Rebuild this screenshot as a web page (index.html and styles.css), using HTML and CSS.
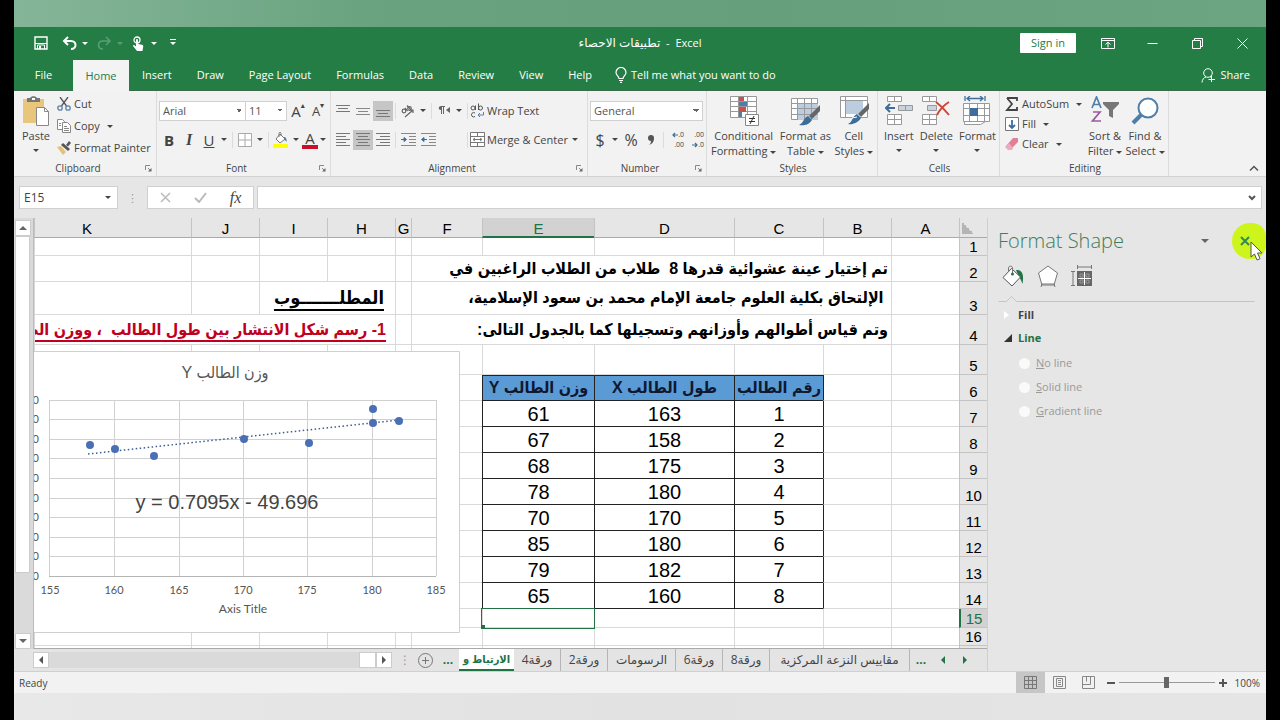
FILE: index.html
```html
<!DOCTYPE html>
<html lang="en">
<head>
    <meta charset="UTF-8">
    <meta name="viewport" content="width=device-width, initial-scale=1.0">
    <title>تطبيقات الاحصاء - Excel</title>
    <link rel="stylesheet" href="styles.css">
</head>
<body>
<div class="desktop">
    <div class="wallpaper"></div>

    <header class="titlebar">
        <div class="quick-access">
            <button class="save" aria-label="Save"><svg width="14" height="14" viewBox="0 0 14 14" fill="none" stroke="#fff"><path d="M1 1h12v12H1z" stroke-width="1.4"/><path d="M3.500 13V9h7v4M1 7.500h12"/><path d="M5 10h2v3H5z" fill="#fff" stroke="none"/></svg></button>
            <button aria-label="Undo"><svg width="15" height="14" viewBox="0 0 15 14" fill="none" stroke="#fff" stroke-width="2"><path d="M6 1L2 5l4 4M2 5h7c6 0 6 8 0 8"/></svg><i class="caret"></i></button>
            <button class="dim" aria-label="Redo"><svg width="15" height="14" viewBox="0 0 15 14" fill="none" stroke="#fff" stroke-width="1.5"><path d="M9 1l4 4-4 4M13 5H6c-6 0-6 8 0 8"/></svg><i class="caret"></i></button>
            <button aria-label="Touch mode"><svg width="14" height="15" viewBox="0 0 14 15"><circle cx="5" cy="4" r="3" fill="none" stroke="#fff" stroke-width="1.3"/><path d="M4 4c0-1.500 2-1.500 2 0v4l4 .7c1 .3 1.400 1 1.200 2L10.500 15H5L1 10c0-1 1-1.300 1.700-.6L4 10.500z" fill="#fff"/></svg><i class="caret"></i></button>
            <button aria-label="Customize"><i class="caret lined"></i></button>
        </div>
        <div class="doc-name"><span lang="ar">تطبيقات الاحصاء</span>&nbsp; - &nbsp;Excel</div>
        <div class="window-controls">
            <button class="sign-in">Sign in</button>
            <button aria-label="Ribbon display"><svg width="14" height="11" viewBox="0 0 14 11" fill="none" stroke="#fff"><path d="M.5.5h13v10H.5zM.5 2.500h13M7 9.500v-5M4.500 6.500L7 4.200l2.500 2.300"/></svg></button>
            <button aria-label="Minimize"><svg width="11" height="11" viewBox="0 0 11 11" stroke="#fff"><path d="M.5 5.500h10"/></svg></button>
            <button aria-label="Restore"><svg width="11" height="11" viewBox="0 0 11 11" fill="none" stroke="#fff"><path d="M.5 2.500h8v8h-8zM2.500 2.500v-2h8v8h-2"/></svg></button>
            <button aria-label="Close"><svg width="11" height="11" viewBox="0 0 11 11" stroke="#fff"><path d="M.5.5l10 10M10.500.5l-10 10"/></svg></button>
        </div>
    </header>

    <nav class="tabs">
        <button class="file">File</button>
        <button class="active">Home</button>
        <button>Insert</button>
        <button>Draw</button>
        <button>Page Layout</button>
        <button>Formulas</button>
        <button>Data</button>
        <button>Review</button>
        <button>View</button>
        <button>Help</button>
        <button class="tell-me"><svg width="12" height="16" viewBox="0 0 12 16" fill="none" stroke="#fff" stroke-width="1.200"><path d="M4 11.500C4 9 1 8.500 1 5.500a5 5 0 0 1 10 0C11 8.500 8 9 8 11.500zM4 13.500h4M5 15.300h2"/></svg>Tell me what you want to do</button>
        <button class="share"><svg width="15" height="15" viewBox="0 0 15 15" fill="none" stroke="#fff"><circle cx="7" cy="5" r="4.300"/><path d="M1 14.500c.3-3 1.500-4.800 4-5.500M9 8.500l1.500 1M10.500 8v6M7.500 11.500h6.500"/></svg>Share</button>
    </nav>

    <section class="ribbon">
        <div class="group clipboard">
            <div class="tools">
                <button class="big">
                    <svg width="28" height="30" viewBox="0 0 28 30"><path d="M1 3h21v24H1z" fill="#e8c77c"/><path d="M5 2h3c1-2.500 6-2.500 7 0h3v4H5z" fill="#777"/><path d="M10 2h3v2h-3z" fill="#fff"/><path d="M14.500 11.500h8l4 4v14h-12z" fill="#fff" stroke="#888"/><path d="M22.500 11.500v4h4" fill="none" stroke="#888"/></svg>
                    <span>Paste</span><i class="caret"></i>
                </button>
                <div class="stack">
                    <button><svg width="14" height="14" viewBox="0 0 14 14" fill="none" stroke="#555" stroke-width="1.300"><path d="M3 0l6.500 9M11 0L4.500 9"/><circle cx="3" cy="11" r="2.200" stroke="#5b82a6"/><circle cx="11" cy="11" r="2.200" stroke="#5b82a6"/></svg>Cut</button>
                    <button><svg width="14" height="14" viewBox="0 0 14 14" fill="#fff" stroke="#888"><path d="M.5.5h5l2 2v8h-7z"/><path d="M5.500 3.500h5l3 3v7h-8z"/><path d="M7 7.500h3M7 9.500h5M7 11.500h5M2 4.500h2M2 6.500h2"/></svg>Copy<i class="caret"></i></button>
                    <button><svg width="14" height="14" viewBox="0 0 14 14"><path d="M0 6l4-1 5 6-3 3z" fill="#e4c07a"/><path d="M4 4l2-2 7 6-2 2z" fill="#555"/><path d="M9 4l3-4 2 2-3 3.500z" fill="#555"/></svg>Format Painter</button>
                </div>
            </div>
            <div class="group-name">Clipboard</div>
            <svg class="launcher" width="7" height="7" viewBox="0 0 7 7"><path d="M.5 5V.5H5M3 3l3 3" fill="none" stroke="#888"/><path d="M6.500 3v3.500H3z" fill="#666"/></svg>
        </div>

        <div class="group font">
            <div class="tools rows">
                <div class="row">
                    <select class="font-name" aria-label="Font"><option>Arial</option></select>
                    <select class="font-size" aria-label="Font size"><option>11</option></select>
                    <button class="glyph grow" aria-label="Increase font size">A<i class="mark">▴</i></button>
                    <button class="glyph shrink" aria-label="Decrease font size">A<i class="mark">▾</i></button>
                </div>
                <div class="row">
                    <button class="glyph"><b>B</b></button>
                    <button class="glyph serif"><i>I</i></button>
                    <button class="glyph"><u>U</u></button><i class="caret"></i>
                    <i class="divider"></i>
                    <button class="glyph" aria-label="Borders"><svg width="14" height="14" viewBox="0 0 14 14" fill="#fff" stroke="#aaa"><path d="M.5.5h13v13H.5zM7 .5v13M.5 7h13"/></svg></button><i class="caret"></i>
                    <i class="divider"></i>
                    <button class="glyph" aria-label="Fill colour"><svg width="16" height="16" viewBox="0 0 16 16"><path d="M7 2l5 5-5 4-4-4z" fill="#fff" stroke="#777"/><path d="M6 5V1.500c0-1.500 2-1.500 2 0V4" fill="none" stroke="#777"/><path d="M11 5c2 0 3 2 2.500 5-.8-1-1-2-2.500-2z" fill="#4f7fa8"/><path d="M0 12h15v4H0z" fill="#ffff00"/></svg></button><i class="caret"></i>
                    <button class="glyph font-color" aria-label="Font colour">A</button><i class="caret"></i>
                </div>
            </div>
            <div class="group-name">Font</div>
            <svg class="launcher" width="7" height="7" viewBox="0 0 7 7"><path d="M.5 5V.5H5M3 3l3 3" fill="none" stroke="#888"/><path d="M6.500 3v3.500H3z" fill="#666"/></svg>
        </div>

        <div class="group alignment">
            <div class="tools rows">
                <div class="row">
                    <button class="glyph" aria-label="Top align"><svg width="14" height="14" viewBox="0 0 14 14" stroke="#777"><path d="M0 1.500h14M2 4.500h10M0 7.500h14"/></svg></button>
                    <button class="glyph" aria-label="Middle align"><svg width="14" height="14" viewBox="0 0 14 14" stroke="#888"><path d="M0 4.500h14M2 7.500h10M0 10.500h14"/></svg></button>
                    <button class="glyph on" aria-label="Bottom align"><svg width="14" height="14" viewBox="0 0 14 14" stroke="#777"><path d="M0 6.500h14M2 9.500h10M0 12.500h14"/></svg></button>
                    <i class="divider"></i>
                    <button class="glyph" aria-label="Orientation"><svg width="14" height="14" viewBox="0 0 14 14" fill="none" stroke="#666" stroke-width="1.200"><circle cx="3" cy="7" r="1.800"/><path d="M4 4l2.500 3M6 1.500L10 6"/><circle cx="8.500" cy="4.500" r="1.800"/><path d="M4 13l8-7M12 9V6H9"/></svg></button><i class="caret"></i>
                    <i class="divider"></i>
                    <button class="glyph" aria-label="Text direction"><svg width="12" height="9" viewBox="0 0 12 9" fill="#666"><path d="M3 0h4v1H6v7H5V1H4v7H3V4C0 4 0 0 3 0zM12 1v6L8 4z"/></svg></button><i class="caret"></i>
                    <i class="divider"></i>
                    <button class="wide"><svg width="15" height="15" viewBox="0 0 15 15" fill="none" stroke="#555"><ellipse cx="3" cy="5" rx="2" ry="2"/><path d="M5.500 2.500V7M8.500.5V7"/><circle cx="10.500" cy="5" r="2"/><path d="M5 10a2.200 2.200 0 1 0 0 3.500"/><path d="M13.500 9v3H8M10 10l-2 2 2 2" stroke="#5b82a6"/></svg>Wrap Text</button>
                </div>
                <div class="row">
                    <button class="glyph" aria-label="Align left"><svg width="14" height="14" viewBox="0 0 14 14" stroke="#777"><path d="M0 .5h14M0 3.500h10M0 6.500h14M0 9.500h10M0 12.500h14"/></svg></button>
                    <button class="glyph on" aria-label="Center"><svg width="14" height="14" viewBox="0 0 14 14" stroke="#777"><path d="M0 .5h14M2 3.500h10M0 6.500h14M2 9.500h10M0 12.500h14"/></svg></button>
                    <button class="glyph" aria-label="Align right"><svg width="14" height="14" viewBox="0 0 14 14" stroke="#777"><path d="M0 .5h14M4 3.500h10M0 6.500h14M4 9.500h10M0 12.500h14"/></svg></button>
                    <i class="divider"></i>
                    <button class="glyph" aria-label="Decrease indent"><svg width="15" height="14" viewBox="0 0 15 14" stroke="#888"><path d="M0 .5h15M8 3.500h7M8 6.500h7M8 9.500h7M0 12.500h15"/><path d="M0 6.500h4M3 4.500l2.500 2L3 8.500z" fill="#3d6e99" stroke="#3d6e99"/></svg></button>
                    <button class="glyph" aria-label="Increase indent"><svg width="15" height="14" viewBox="0 0 15 14" stroke="#888"><path d="M0 .5h15M8 3.500h7M8 6.500h7M8 9.500h7M0 12.500h15"/><path d="M2 6.500h4M3 4.500L.5 6.500 3 8.500z" fill="#3d6e99" stroke="#3d6e99"/></svg></button>
                    <i class="spacer"></i>
                    <i class="divider"></i>
                    <button class="wide merge"><svg width="15" height="15" viewBox="0 0 15 15" fill="#fff" stroke="#777"><path d="M.5.500h14v14H.5zM.5 4.500h14M.5 10.500h14M7.500.5v4M7.500 10.500v4"/><path d="M3 7.500h9M5 6L3 7.500 5 9M10 6l2 1.500L10 9" fill="none"/></svg>Merge &amp; Center<i class="caret"></i></button>
                </div>
            </div>
            <div class="group-name">Alignment</div>
            <svg class="launcher" width="7" height="7" viewBox="0 0 7 7"><path d="M.5 5V.5H5M3 3l3 3" fill="none" stroke="#888"/><path d="M6.500 3v3.500H3z" fill="#666"/></svg>
        </div>

        <div class="group number">
            <div class="tools rows">
                <div class="row">
                    <select class="format" aria-label="Number format"><option>General</option></select>
                </div>
                <div class="row">
                    <button class="glyph money">$</button><i class="caret"></i>
                    <button class="glyph money">%</button>
                    <button class="glyph comma" aria-label="Comma style"><svg width="6" height="10" viewBox="0 0 6 10"><path d="M3 0a3 3 0 0 1 3 3c0 4-2 6-5 7 1-1 2-2 2-4a3 3 0 1 1 0-6z" fill="#555"/></svg></button>
                    <i class="divider"></i>
                    <button class="glyph decimals" aria-label="Increase decimal"><span><svg width="6" height="6" viewBox="0 0 6 6"><path d="M6 3H1M3 1L1 3l2 2" fill="none" stroke="#3d6e99" stroke-width="1.200"/></svg>.0</span><span>.00</span></button>
                    <button class="glyph decimals" aria-label="Decrease decimal"><span>.00</span><span><svg width="6" height="6" viewBox="0 0 6 6"><path d="M0 3h5M3 1l2 2-2 2" fill="none" stroke="#3d6e99" stroke-width="1.200"/></svg>.0</span></button>
                </div>
            </div>
            <div class="group-name">Number</div>
            <svg class="launcher" width="7" height="7" viewBox="0 0 7 7"><path d="M.5 5V.5H5M3 3l3 3" fill="none" stroke="#888"/><path d="M6.500 3v3.500H3z" fill="#666"/></svg>
        </div>

        <div class="group styles">
            <div class="tools">
                <button class="big">
                    <svg width="30" height="30" viewBox="0 0 30 30"><path d="M1.500.5h26v21h-26zM1.500 5.500h26M1.500 10.500h26M1.500 15.500h26M9.500.5v21M18.500.5v21" fill="#fff" stroke="#999"/><path d="M10 1h5v4h-5zM10 11h7v5h-7z" fill="#c9504c"/><path d="M10 6h8v4h-8zM10 16h3v5h-3z" fill="#4f7fa8"/><path d="M16.500 18.500h13v11h-13z" fill="#fff" stroke="#888"/><path d="M20 22.500h6M20 25.500h6M25 20l-4 8" stroke="#333"/></svg>
                    <span>Conditional<br>Formatting <i class="caret"></i></span>
                </button>
                <button class="big">
                    <svg width="30" height="30" viewBox="0 0 30 30"><path d="M1.500 2.500h26v21h-26z" fill="#fff" stroke="#999"/><path d="M8 8h20v16H8z" fill="#bccde0"/><path d="M1.500 7.500h26M1.500 12.500h26M1.500 18.500h26M7.500 2.500v21M14.500 2.500v21M21.500 2.500v21" fill="none" stroke="#999"/><path d="M30 9v6l-8 8-3-3z" fill="#666"/><path d="M18 20l4 4c-3 5-9 6-13 5 5-2 4-7 9-9z" fill="#3d6e99"/></svg>
                    <span>Format as<br>Table <i class="caret"></i></span>
                </button>
                <button class="big">
                    <svg width="30" height="30" viewBox="0 0 30 30"><path d="M1.500.5h27v21h-27zM1.500 4.500h27M6.500.5v21" fill="#fff" stroke="#999"/><path d="M7 5h17v13H7z" fill="#bccde0"/><path d="M30 7v6l-8 8-3-3z" fill="#666"/><path d="M18 18l4 4c-3 5-9 7-13 6 5-2 4-8 9-10z" fill="#3d6e99"/><path d="M13 22l5-1" stroke="#fff"/></svg>
                    <span>Cell<br>Styles <i class="caret"></i></span>
                </button>
            </div>
            <div class="group-name">Styles</div>
        </div>

        <div class="group cells">
            <div class="tools">
                <button class="big">
                    <svg width="28" height="30" viewBox="0 0 28 30" fill="#fff" stroke="#999"><path d="M2.500.5h14v5h-14zM9.500.5v5M2.500 18.500h14v10h-14zM9.500 18.500v10M2.500 23.500h14"/><path d="M13.500 9.500h14v5h-14zM20.500 9.500v5" fill="#c9d3df"/><path d="M10 12H1.500M5 8l-4 4 4 4" fill="none" stroke="#3d6e99" stroke-width="2"/></svg>
                    <span>Insert</span><i class="caret"></i>
                </button>
                <button class="big">
                    <svg width="28" height="30" viewBox="0 0 28 30" fill="#fff" stroke="#999"><path d="M.5.5h14v5H.5zM7.500.5v5M.5 18.500h14v10H.5zM7.500 18.500v10M.5 23.500h14"/><path d="M5.500 9.500h9v5h-9z" fill="#c9d3df"/><path d="M14 6c4 3 9 8 13 13M27 6c-5 3-9 7-12 13" fill="none" stroke="#d0453a" stroke-width="2"/></svg>
                    <span>Delete</span><i class="caret"></i>
                </button>
                <button class="big">
                    <svg width="28" height="30" viewBox="0 0 28 30" fill="#fff" stroke="#999"><path d="M.5 7.500h26v18H.5zM.5 12.500h26M.5 19.500h26M6.500 7.500v18M14.500 7.500v18M21.500 7.500v18M1.500 25.500v3h16l5-3"/><path d="M7 12h8v8H7z" fill="#3d6e99" stroke="none"/><path d="M2 0v5M22 0v5M4 2.500h16M7 0L4 2.500 7 5M17 0l3 2.500L17 5" fill="none" stroke="#3d6e99" stroke-width="1.300"/></svg>
                    <span>Format</span><i class="caret"></i>
                </button>
            </div>
            <div class="group-name">Cells</div>
        </div>

        <div class="group editing">
            <div class="tools">
                <div class="stack">
                    <button><svg width="14" height="14" viewBox="0 0 14 14"><path d="M2 1h10v3M12 10v3H2l5-6-5-6" fill="none" stroke="#444" stroke-width="1.800"/></svg>AutoSum <i class="caret far"></i></button>
                    <button><svg width="14" height="14" viewBox="0 0 14 14" fill="#fff" stroke="#777"><path d="M.5.5h13v13H.5z"/><path d="M7 3v8M4 8l3 3 3-3" fill="none" stroke="#3d6e99" stroke-width="1.800"/></svg>Fill<i class="caret"></i></button>
                    <button><svg width="14" height="14" viewBox="0 0 14 14"><path d="M8 1h5v4l-6 6H2L1 9z" fill="#e27f97"/><path d="M4 6l4 5-1 2H3L0 10z" fill="#edaab9"/></svg>Clear<i class="caret"></i></button>
                </div>
                <button class="big">
                    <svg width="30" height="30" viewBox="0 0 30 30"><path d="M2 12L6.500 1 11 12M3.500 8.500h6" fill="none" stroke="#4f7fa8" stroke-width="1.700"/><path d="M3 16h7L2.500 25H11" fill="none" stroke="#9a5aa0" stroke-width="1.700"/><path d="M13 6h16v2l-6 6v8l-4-2v-6l-6-6z" fill="#777"/></svg>
                    <span>Sort &amp;<br>Filter <i class="caret"></i></span>
                </button>
                <button class="big">
                    <svg width="28" height="28" viewBox="0 0 28 28" fill="none"><path d="M12 16L2 26" stroke="#4f7fa8" stroke-width="4"/><circle cx="17" cy="11" r="9.500" fill="#fff" stroke="#4f7fa8" stroke-width="2"/></svg>
                    <span>Find &amp;<br>Select <i class="caret"></i></span>
                </button>
            </div>
            <div class="group-name">Editing</div>
        </div>
        <button class="collapse" aria-label="Collapse ribbon"><svg width="10" height="6" viewBox="0 0 10 6" fill="none" stroke="#555" stroke-width="1.500"><path d="M1 5.500l4-4 4 4"/></svg></button>
    </section>

    <section class="formula-bar">
        <div class="name-box"><input type="text" value="E15" aria-label="Name box"><i class="caret"></i></div>
        <i class="dots">⋮</i>
        <div class="fx">
            <button aria-label="Cancel"><svg width="11" height="11" viewBox="0 0 11 11" stroke="#bbb" stroke-width="1.500"><path d="M1 1l9 9M10 1l-9 9"/></svg></button>
            <button aria-label="Enter"><svg width="13" height="11" viewBox="0 0 13 11" fill="none" stroke="#bbb" stroke-width="2"><path d="M1 6l4 4 7-9"/></svg></button>
            <button class="fn">fx</button>
        </div>
        <div class="formula"><input type="text" aria-label="Formula"><svg width="8" height="6" viewBox="0 0 8 6" fill="none" stroke="#555" stroke-width="2"><path d="M1 1l3 3 3-3"/></svg></div>
    </section>

    <main class="workspace">
        <div class="sheet-area">
            <div class="sheet-row">
                <div class="vscroll">
                    <button aria-label="Scroll up"><i class="tri up"></i></button>
                    <div class="thumb"></div>
                    <button class="down" aria-label="Scroll down"><i class="tri dn"></i></button>
                </div>
                <div class="sheet" dir="rtl">
                    <table lang="ar">
                        <colgroup>
                            <col class="c-head"><col class="c-a"><col class="c-b"><col class="c-c"><col class="c-d"><col class="c-e"><col class="c-f"><col class="c-g"><col class="c-h"><col class="c-h"><col class="c-h"><col>
                        </colgroup>
                        <thead>
                            <tr><th class="corner"></th><th>A</th><th>B</th><th>C</th><th>D</th><th class="current">E</th><th>F</th><th>G</th><th>H</th><th>I</th><th>J</th><th class="k">K</th></tr>
                        </thead>
                        <tbody>
                            <tr class="h18"><th>1</th><td></td><td></td><td></td><td></td><td></td><td></td><td></td><td></td><td></td><td></td><td></td></tr>
                            <tr class="h26"><th>2</th><td></td><td class="text" colspan="5">تم إختيار عينة عشوائية قدرها 8&nbsp; طلاب من الطلاب الراغبين في</td><td></td><td></td><td></td><td></td><td></td></tr>
                            <tr class="h33"><th>3</th><td></td><td class="text" colspan="5">&nbsp;الإلتحاق بكلية العلوم جامعة الإمام محمد بن سعود الإسلامية،</td><td></td><td class="text heading" colspan="2"><u>المطلـــــــوب</u></td><td></td><td></td></tr>
                            <tr class="h30"><th>4</th><td></td><td class="text" colspan="5">وتم قياس أطوالهم وأوزانهم وتسجيلها كما بالجدول التالى:</td><td></td><td class="text task" colspan="4"><u>1- رسم شكل الانتشار بين طول الطالب&nbsp; ، ووزن الطالب</u></td></tr>
                            <tr class="h30"><th>5</th><td></td><td></td><td></td><td></td><td></td><td></td><td></td><td></td><td></td><td></td><td></td></tr>
                            <tr class="h26 titles"><th>6</th><td></td><td class="edge"></td><td class="box">رقم الطالب</td><td class="box">طول الطالب X</td><td class="box">وزن الطالب Y</td><td></td><td></td><td></td><td></td><td></td><td></td></tr>
                            <tr class="h26"><th>7</th><td></td><td class="edge"></td><td class="box">1</td><td class="box">163</td><td class="box">61</td><td></td><td></td><td></td><td></td><td></td><td></td></tr>
                            <tr class="h26"><th>8</th><td></td><td class="edge"></td><td class="box">2</td><td class="box">158</td><td class="box">67</td><td></td><td></td><td></td><td></td><td></td><td></td></tr>
                            <tr class="h26"><th>9</th><td></td><td class="edge"></td><td class="box">3</td><td class="box">175</td><td class="box">68</td><td></td><td></td><td></td><td></td><td></td><td></td></tr>
                            <tr class="h26"><th>10</th><td></td><td class="edge"></td><td class="box">4</td><td class="box">180</td><td class="box">78</td><td></td><td></td><td></td><td></td><td></td><td></td></tr>
                            <tr class="h26"><th>11</th><td></td><td class="edge"></td><td class="box">5</td><td class="box">170</td><td class="box">70</td><td></td><td></td><td></td><td></td><td></td><td></td></tr>
                            <tr class="h26"><th>12</th><td></td><td class="edge"></td><td class="box">6</td><td class="box">180</td><td class="box">85</td><td></td><td></td><td></td><td></td><td></td><td></td></tr>
                            <tr class="h26"><th>13</th><td></td><td class="edge"></td><td class="box">7</td><td class="box">182</td><td class="box">79</td><td></td><td></td><td></td><td></td><td></td><td></td></tr>
                            <tr class="h26"><th>14</th><td></td><td class="edge"></td><td class="box">8</td><td class="box">160</td><td class="box">65</td><td></td><td></td><td></td><td></td><td></td><td></td></tr>
                            <tr class="h19"><th class="current">15</th><td></td><td></td><td></td><td></td><td class="selected"></td><td></td><td></td><td></td><td></td><td></td><td></td></tr>
                            <tr class="h18"><th>16</th><td></td><td></td><td></td><td></td><td></td><td></td><td></td><td></td><td></td><td></td><td></td></tr>
                            <tr class="h18"><th></th><td></td><td></td><td></td><td></td><td></td><td></td><td></td><td></td><td></td><td></td><td></td></tr>
                        </tbody>
                    </table>
                    <svg class="chart" width="446" height="282" viewBox="0 0 446 282">
                        <path d="M-1 .5h446.500v281H-1z" fill="#fff" stroke="#cfcfcf"/>
                        <g stroke="#d0d0d0">
                            <path d="M35.500 49v176M100.500 49v176M165.500 49v176M229.500 49v176M293.500 49v176M358.500 49v176M422.500 49v176"/>
                            <path d="M35 49.500h387M35 68.500h387M35 88.500h387M35 107.500h387M35 127.500h387M35 147.500h387M35 166.500h387M35 186.500h387M35 205.500h387"/>
                            <path d="M35 225.500h387" stroke="#b5b5b5"/>
                        </g>
                        <path d="M74 103L385 69" stroke="#3c5c92" stroke-width="1.500" stroke-dasharray="1.500 2.500"/>
                        <g fill="#4a6fb5">
                            <circle cx="76" cy="94" r="4"/><circle cx="101" cy="98" r="4"/><circle cx="140" cy="105" r="4"/><circle cx="230" cy="88" r="4"/><circle cx="295" cy="92" r="4"/><circle cx="359" cy="58" r="4"/><circle cx="359" cy="72" r="4"/><circle cx="385" cy="70" r="4"/>
                        </g>
                        <g class="axis">
                            <text class="value" x="25" y="53">90</text><text class="value" x="25" y="72">80</text><text class="value" x="25" y="92">70</text><text class="value" x="25" y="111">60</text><text class="value" x="25" y="131">50</text><text class="value" x="25" y="151">40</text><text class="value" x="25" y="170">30</text><text class="value" x="25" y="190">20</text><text class="value" x="25" y="209">10</text>
                            <text class="value" x="25" y="229">0</text>
                            <text x="36" y="243">155</text><text x="100" y="243">160</text><text x="165" y="243">165</text><text x="229" y="243">170</text><text x="293" y="243">175</text><text x="358" y="243">180</text><text x="422" y="243">185</text>
                            <text class="axis-title" x="229" y="262">Axis Title</text>
                        </g>
                        <text class="equation" x="213" y="158">y = 0.7095x - 49.696</text>
                        <text class="chart-title" x="211" y="27">وزن الطالب Y</text>
                    </svg>
                </div>
            </div>

            <div class="sheet-bar">
                <div class="hscroll">
                    <button aria-label="Scroll left"><i class="tri lf"></i></button>
                    <div class="thumb"></div>
                    <button aria-label="Scroll right"><i class="tri rt"></i></button>
                </div>
                <i class="dots">⋮</i>
                <button class="add" aria-label="New sheet"><svg width="15" height="15" viewBox="0 0 15 15" fill="none" stroke="#777"><circle cx="7.500" cy="7.500" r="7"/><path d="M7.500 4v7M4 7.500h7"/></svg></button>
                <span class="more">...</span>
                <div class="sheets" lang="ar">
                    <button class="active">الارتباط و</button>
                    <button>ورقة4</button>
                    <button>ورقة2</button>
                    <button>الرسومات</button>
                    <button>ورقة6</button>
                    <button>ورقة8</button>
                    <button>مقاييس النزعة المركزية</button>
                </div>
                <span class="more">...</span>
                <button class="nav" aria-label="Previous sheet"><i class="tri lf"></i></button>
                <button class="nav" aria-label="Next sheet"><i class="tri rt"></i></button>
            </div>
        </div>

        <aside class="pane">
            <div class="pane-head">
                <h2>Format Shape</h2>
                <i class="tri dn"></i>
                <button class="close" aria-label="Close pane"><svg width="10" height="10" viewBox="0 0 10 10" stroke="#2e8b57" stroke-width="2"><path d="M1 1l8 8M9 1L1 9"/></svg></button>
            </div>
            <div class="pane-icons">
                <button aria-label="Fill and line"><svg width="23" height="23" viewBox="0 0 23 23"><path d="M14 5c7-1 8 6 6.500 14-1-2-1.500-5-3.500-7z" fill="#217346"/><path d="M9.500 3.500l9 8.500-8.500 9L1 12.500z" fill="#fff" stroke="#555"/><path d="M6.500 7V3c0-2.500 4-2.500 4 0v6" fill="none" stroke="#777"/><circle cx="10.500" cy="9" r="1.500" fill="#217346"/></svg></button>
                <button aria-label="Effects"><svg width="22" height="23" viewBox="0 0 22 23"><path d="M11 1l9.500 7-3.500 12H5L1.500 8z" fill="#fff" stroke="#777"/><path d="M4 22l1-3h12l1 3" fill="none" stroke="#777"/></svg></button>
                <button aria-label="Size and properties"><svg width="21" height="22" viewBox="0 0 21 22"><path d="M6 6h15v15H6z" fill="#666"/><path d="M13.500 7v13M7 13.500h13" stroke="#fff"/><path d="M9 9h3v3H9zM15 9h3v3h-3zM9 15h3v3H9zM15 15h3v3h-3z" fill="none" stroke="#999"/><path d="M6.500 0v4M20.500 0v4M6 2h15M0 6.500h4M0 20.500h4M2 6v15" stroke="#777"/></svg></button>
            </div>
            <svg class="notch" viewBox="0 0 256 8" width="256" height="8" fill="none" stroke="#c4c4c4"><path d="M0 6.500h8l5-5 5 5h238"/></svg>
            <button class="section"><i class="tri closed"></i>Fill</button>
            <button class="section open"><i class="tri opened"></i>Line</button>
            <div class="options">
                <label><input type="radio" name="line" disabled><span><u>N</u>o line</span></label>
                <label><input type="radio" name="line" disabled><span><u>S</u>olid line</span></label>
                <label><input type="radio" name="line" disabled><span><u>G</u>radient line</span></label>
            </div>
            <div class="pointer">
                <svg width="14" height="20" viewBox="0 0 14 20"><path d="M1 1v15l3.500-3 2.500 6 3-1.300-2.500-5.700H12z" fill="#fff" stroke="#555"/></svg>
            </div>
        </aside>
    </main>

    <footer class="status">
        <span class="ready">Ready</span>
        <button class="view on" aria-label="Normal"><svg width="13" height="13" viewBox="0 0 13 13" fill="none" stroke="#777"><path d="M.5.5h12v12H.5zM.5 4.500h12M.5 8.500h12M4.500.5v12M8.500.5v12"/></svg></button>
        <button class="view" aria-label="Page layout"><svg width="13" height="13" viewBox="0 0 13 13" fill="none" stroke="#888"><path d="M.5.5h12v12H.5zM3.500 2.500h6v8h-6zM5 4.500h3M5 6.500h3M5 8.500h3"/></svg></button>
        <button class="view" aria-label="Page break"><svg width="13" height="13" viewBox="0 0 13 13" fill="none" stroke="#888"><path d="M.5.5h12v12H.5zM.5 8.500h8M4.500.5v5M8.500.5v8"/></svg></button>
        <button class="step" aria-label="Zoom out"><svg width="8" height="8" viewBox="0 0 8 8" stroke="#555" stroke-width="2"><path d="M0 4h8"/></svg></button>
        <input class="zoom" type="range" min="0" max="200" value="100" aria-label="Zoom">
        <button class="step" aria-label="Zoom in"><svg width="8" height="8" viewBox="0 0 8 8" stroke="#555" stroke-width="2"><path d="M0 4h8M4 0v8"/></svg></button>
        <span class="percent">100%</span>
    </footer>
    <div class="taskbar"></div>
</div>
</body>
</html>
```
FILE: styles.css
```css
* {
    box-sizing: border-box;
}

body {
    margin: 0;
    background: #000;
    font-family: "Open Sans", "DejaVu Sans", sans-serif;
    font-size: 11px;
    line-height: 16px;
    color: #444;
}

button {
    font: inherit;
    color: inherit;
    background: none;
    border: 0;
    padding: 0;
    cursor: pointer;
    white-space: nowrap;
}

svg {
    display: block;
    flex: none;
}

.desktop {
    display: flex;
    flex-direction: column;
    height: 100vh;
    margin: 0 14px;
    background: #e5e5e5;
}

.desktop > * {
    flex-shrink: 0;
}

.wallpaper {
    height: 27px;
    background: linear-gradient(90deg, #85b598, #68a27e 30%, #669f7b 60%, #6ca581);
}

/* small triangles */
.caret {
    flex: none;
    display: inline-block;
    border: 3px solid transparent;
    border-top-color: currentColor;
    border-bottom: 0;
    vertical-align: middle;
}

.tri {
    flex: none;
    display: inline-block;
    border: 4px solid transparent;
}

.tri.up { border-bottom-color: #666; border-top: 0; }
.tri.dn { border-top-color: #666; border-bottom: 0; }
.tri.lf { border-right-color: #555; border-left: 0; }
.tri.rt { border-left-color: #555; border-right: 0; }

/* title bar */
.titlebar {
    display: grid;
    grid-template-columns: 1fr auto 1fr;
    align-items: center;
    height: 32px;
    background: #257d46;
    color: #fff;
}

.doc-name span {
    font-size: 12px;
}

.quick-access {
    display: flex;
    align-items: center;
    gap: 9px;
    padding-left: 20px;
}

.quick-access button {
    display: flex;
    align-items: center;
    gap: 5px;
}

.quick-access .save {
    margin-right: 5px;
}

.quick-access .dim {
    opacity: 0.25;
}

.lined {
    position: relative;
    margin-left: 4px;
}

.lined::before {
    content: "";
    position: absolute;
    left: -3px;
    top: -6px;
    width: 6px;
    height: 1px;
    background: #fff;
}

.window-controls {
    display: flex;
    justify-content: flex-end;
    align-items: center;
    padding-right: 1px;
}

.window-controls button {
    width: 45px;
    display: flex;
    justify-content: center;
}

.window-controls .sign-in {
    width: 56px;
    margin-right: 9px;
    padding: 2px 0;
    background: #fff;
    color: #257d46;
    border-radius: 1px;
}

/* ribbon tabs */
.tabs {
    display: flex;
    height: 32px;
    padding-left: 1px;
    background: #257d46;
    border-bottom: 1px solid #3c6b4c;
    color: #fff;
}

.tabs button {
    padding: 1px 12px 0 13px;
}

.tabs .file {
    width: 57px;
    padding: 1px 0 0;
}

.tabs .active {
    width: 56px;
    padding: 0;
    margin: 1px 0 -1px 1px;
    background: #f3f3f3;
    color: #257d46;
}

.tabs .tell-me,
.tabs .share {
    display: flex;
    align-items: center;
    gap: 4px;
    padding: 1px 11px 0;
}

.tabs .share {
    margin-left: auto;
    padding-right: 16px;
}

/* ribbon */
.ribbon {
    display: flex;
    height: 86px;
    background: #f2f2f2;
    border-bottom: 1px solid #d2d2d2;
}

.group {
    position: relative;
    display: flex;
    flex-direction: column;
    padding: 5px 0 0 2px;
    border-right: 1px solid #dcdcdc;
}

.clipboard { width: 143px; }
.font { width: 174px; }
.alignment { width: 257px; }
.number { width: 119px; }
.styles { width: 171px; }
.cells { width: 122px; }
.editing { width: 169px; }

.tools {
    display: flex;
    height: 64px;
}

.group-name {
    padding-right: 16px;
    text-align: center;
    font-size: 10px;
}

.styles .group-name,
.cells .group-name,
.editing .group-name {
    padding-right: 0;
}

.launcher {
    position: absolute;
    right: 4px;
    bottom: 4px;
}

.big {
    display: flex;
    flex-direction: column;
    align-items: center;
    line-height: 15px;
}

.big svg {
    height: 30px;
    margin-bottom: 2px;
}

.big > .caret {
    margin-top: 6px;
}

.clipboard .big { width: 40px; }
.clipboard .tools { gap: 1px; }

.stack {
    display: flex;
    flex-direction: column;
    justify-content: space-between;
    height: 60px;
}

.stack button {
    display: flex;
    align-items: center;
    gap: 3px;
}

.stack button .caret {
    margin-left: 4px;
}

.rows {
    flex-direction: column;
    padding-top: 4px;
    gap: 8px;
}

.row {
    display: flex;
    align-items: center;
    height: 21px;
}

.row .caret {
    margin: 0 3px 0 2px;
}

.glyph {
    display: flex;
    align-items: center;
    justify-content: center;
    width: 20px;
    height: 20px;
    font-size: 15px;
}

.glyph.on {
    background: #c6c6c6;
}

.serif {
    font-family: "Liberation Serif", serif;
    font-size: 16px;
    font-weight: bold;
}

.mark {
    align-self: flex-start;
    font-size: 8px;
    font-style: normal;
    line-height: 8px;
}

.shrink {
    font-size: 13px;
}

.font-color {
    border-bottom: 4px solid #c8102e;
    width: 16px;
    height: 18px;
    line-height: 14px;
}

.divider {
    width: 1px;
    height: 16px;
    margin: 0 2px;
    background: #dcdcdc;
}

.spacer {
    width: 27px;
}

.wide {
    display: flex;
    align-items: center;
    gap: 2px;
}

.glyph.decimals {
    flex-direction: column;
    align-items: flex-end;
    padding-right: 2px;
    font-size: 7px;
    line-height: 10px;
}

.decimals span {
    display: flex;
    align-items: center;
}

.money {
    font-size: 16px;
}

select {
    appearance: none;
    height: 20px;
    padding: 0 3px;
    border: 1px solid #d0d0d0;
    border-radius: 0;
    font: inherit;
    color: #555;
    background-color: #fff;
    background-image: linear-gradient(45deg, transparent 50%, #666 50%), linear-gradient(135deg, #666 50%, transparent 50%);
    background-position: right 6px center, right 3px center;
    background-size: 3px 3px;
    background-repeat: no-repeat;
}

.font-name { width: 87px; }
.font-size { width: 42px; margin-left: -1px; margin-right: 1px; }
.format { width: 113px; }

.styles .tools { justify-content: space-between; padding: 0 4px 0 2px; }
.cells .tools { justify-content: space-between; padding: 0 3px 0 4px; }
.editing .tools { padding-left: 3px; }
.editing .stack { width: 80px; height: 56px; }
.editing .big { width: 40px; }
.stack .far { margin-left: auto; }

.collapse {
    align-self: flex-end;
    margin: 0 7px 5px auto;
}

/* formula bar */
.formula-bar {
    display: flex;
    align-items: center;
    height: 41px;
    padding: 0 4px 0 5px;
    background: #e6e6e6;
}

.name-box,
.fx,
.formula {
    display: flex;
    align-items: center;
    height: 23px;
    background: #fff;
    border: 1px solid #d0d0d0;
}

.name-box {
    width: 99px;
    padding-right: 6px;
    font-size: 12px;
}

.formula-bar input {
    flex: 1;
    min-width: 0;
    border: 0;
    padding: 0 4px;
    font: inherit;
    color: inherit;
    background: none;
}

.dots {
    width: 29px;
    text-align: center;
    font-style: normal;
    color: #999;
}

.fx {
    width: 107px;
    justify-content: space-around;
    margin-right: 3px;
}

.fn {
    font: italic 16px "Liberation Serif", serif;
}

.formula {
    flex: 1;
    padding-right: 5px;
}

/* workspace */
.workspace {
    flex: 1 1 0;
    min-height: 0;
    display: grid;
    grid-template-columns: minmax(0, 1fr) 279px;
    grid-template-rows: minmax(0, 1fr);
    background: #e6e6e6;
}

.sheet-area {
    display: flex;
    flex-direction: column;
    min-height: 0;
}

.sheet-row {
    flex: 1 1 0;
    min-height: 0;
    display: flex;
    overflow: hidden;
}

.vscroll {
    display: flex;
    flex-direction: column;
    width: 20px;
    padding: 2px 3px 0 1px;
    background: #dadada;
    border-right: 1px solid #bbb;
}

.vscroll button,
.hscroll button {
    flex: none;
    display: flex;
    align-items: center;
    justify-content: center;
    width: 16px;
    height: 16px;
    background: #fff;
    border: 1px solid #ccc;
}

.vscroll .thumb {
    height: 337px;
    background: #fff;
    border: 1px solid #ccc;
}

.vscroll .down {
    margin-top: auto;
}

.sheet {
    position: relative;
    flex: 1;
    min-width: 0;
    overflow: hidden;
    background: #fff;
    border-bottom: 1px solid #aaa;
}

.sheet table {
    width: 100%;
    table-layout: fixed;
    border-spacing: 0;
    font-family: "Liberation Sans", "DejaVu Sans Condensed", "DejaVu Sans", sans-serif;
    font-size: 20px;
    line-height: 18px;
    color: #000;
}

.c-head { width: 28px; }
.c-a { width: 68px; }
.c-b { width: 68px; }
.c-c { width: 89px; }
.c-d { width: 140px; }
.c-e { width: 112px; }
.c-f { width: 71px; }
.c-g { width: 16px; }
.c-h { width: 68px; }

.sheet th {
    padding: 0;
    font-size: 15px;
    font-weight: normal;
    line-height: 16px;
    vertical-align: bottom;
    background: #e6e6e6;
    border-bottom: 1px solid #c4c4c4;
    border-left: 1px solid #c4c4c4;
}

.sheet thead th {
    height: 20px;
    border-bottom-color: #aaa;
}

.sheet thead .k {
    padding-right: 99px;
    text-align: right;
}

.sheet th.current {
    background: #d2d2d2;
    color: #217346;
}

.sheet thead th.current {
    border-bottom: 2px solid #217346;
    line-height: 15px;
}

.sheet tbody th.current {
    border-left: 2px solid #217346;
}

.sheet th.corner {
    background: linear-gradient(45deg, #b5b5b5 50%, #e6e6e6 50%) no-repeat 2px 4px / 12px 12px #e6e6e6;
}

.sheet td {
    padding: 0;
    text-align: center;
    border-bottom: 1px solid #d9d9d9;
    border-left: 1px solid #d9d9d9;
}

.h18 { height: 18px; }
.h19 { height: 19px; }
.h26 { height: 26px; }
.h30 { height: 30px; }
.h33 { height: 33px; }

.sheet td.text {
    padding-right: 3px;
    text-align: right;
    white-space: nowrap;
    font-size: 16px;
    font-weight: bold;
}

.sheet td.heading {
    padding-right: 11px;
    font-size: 18px;
}

.sheet td.task {
    padding-right: 9px;
    color: #c00020;
    overflow: hidden;
}

.sheet u {
    text-underline-offset: 5px;
    text-decoration-thickness: 2px;
}

.sheet td.box {
    border-color: #222;
}

.sheet td.edge {
    border-left-color: #222;
}

.titles td.box {
    background: #5b9bd5;
    font-size: 16px;
    font-weight: bold;
    border-top: 1px solid #222;
    color: #101830;
    white-space: nowrap;
}

.sheet td.selected {
    position: relative;
    outline: 1px solid #217346;
}

.selected::after {
    content: "";
    position: absolute;
    left: -2px;
    bottom: -2px;
    width: 4px;
    height: 4px;
    background: #217346;
}

.chart {
    position: absolute;
    top: 133px;
    right: 527px;
    direction: ltr;
}

.axis text {
    font: 11px Lato, sans-serif;
    fill: #555;
    text-anchor: middle;
}

.axis text.value {
    text-anchor: end;
}

.axis text.axis-title {
    font-size: 12px;
}

.equation {
    font: 20px "Liberation Sans", sans-serif;
    fill: #444;
    text-anchor: middle;
}

.chart-title {
    direction: rtl;
    font: 16px "Liberation Sans", "DejaVu Sans Condensed", "DejaVu Sans", sans-serif;
    fill: #555;
    text-anchor: middle;
}

/* sheet tabs */
.sheet-bar {
    display: flex;
    align-items: center;
    height: 22px;
    padding: 0 11px 0 19px;
    background: #e4e4e4;
    font-size: 12px;
}

.hscroll {
    flex: 1;
    display: flex;
    background: #dadada;
}

.hscroll .thumb {
    width: 17px;
    margin-left: auto;
    background: #fff;
    border: 1px solid #ccc;
}

.sheet-bar .dots {
    width: 26px;
}

.more {
    width: 22px;
    text-align: center;
    font-weight: bold;
    color: #217346;
}

.add {
    margin-right: 4px;
}

.sheets {
    display: grid;
    grid-template-columns: 55px 47px 47px 68px 47px 47px 140px;
    height: 22px;
}

.sheets button {
    border-right: 1px solid #b5b5b5;
}

.sheets .active {
    margin-bottom: 2px;
    background: #fff;
    border-right: 0;
    color: #217346;
    font-family: "Open Sans", "DejaVu Sans Condensed", sans-serif;
    font-size: 11px;
    font-weight: bold;
    box-shadow: 0 2px #217346;
}

.nav {
    width: 22px;
    height: 16px;
    line-height: 0;
}

.nav .tri.lf { border-right-color: #217346; }
.nav .tri.rt { border-left-color: #217346; }

/* format pane */
.pane {
    position: relative;
    overflow: hidden;
    padding: 11px 11px 0 10px;
    border-left: 1px solid #cfcfcf;
}

.pane-head {
    display: flex;
    align-items: center;
    height: 24px;
}

.pane h2 {
    margin: 0 auto 0 0;
    font-size: 20px;
    font-weight: 300;
    line-height: 24px;
    color: #3f7d5a;
}

.pane-head .close {
    position: relative;
    z-index: 2;
    margin: 0 5px 0 31px;
}

.pane-icons {
    display: flex;
    align-items: center;
    gap: 12px;
    height: 46px;
    padding-left: 4px;
}

.notch {
    width: 100%;
    margin-top: -4px;
}

.section {
    display: flex;
    align-items: center;
    gap: 6px;
    height: 23px;
    padding-left: 6px;
    font-weight: bold;
}

.section.open {
    color: #217346;
}

.tri.closed {
    width: 8px;
    border-right: 0;
    border-left: 5px solid #fff;
}

.tri.opened {
    width: 8px;
    border-width: 0 0 8px 8px;
    border-bottom-color: #333;
}

.options {
    padding: 2px 0 0 21px;
    color: #999;
}

.options label {
    display: flex;
    align-items: center;
    gap: 6px;
    height: 24px;
}

.options input {
    appearance: none;
    width: 11px;
    height: 11px;
    margin: 0;
    border-radius: 50%;
    background: #fafafa;
}

/* highlighted mouse pointer */
.pointer {
    position: absolute;
    top: 5px;
    right: 0;
    width: 34px;
    height: 36px;
    padding: 18px 0 0 18px;
    border-radius: 18px 14px 14px 18px;
    background: #cdf51c;
}

.pointer svg {
    position: relative;
    z-index: 3;
}

/* status bar */
.status {
    display: flex;
    align-items: center;
    height: 22px;
    padding-right: 6px;
    background: #f2f2f2;
    border-top: 1px solid #d0d0d0;
}

.ready {
    margin: 0 auto 0 5px;
    font-size: 10px;
}

.view {
    display: flex;
    align-items: center;
    justify-content: center;
    width: 29px;
    height: 21px;
}

.view.on {
    background: #c6c6c6;
}

.step {
    margin: 0 4px;
}

.zoom {
    appearance: none;
    width: 96px;
    height: 12px;
    margin: 0;
    background: linear-gradient(#999, #999) no-repeat center / 100% 1px;
}

.zoom::-webkit-slider-thumb {
    appearance: none;
    width: 5px;
    height: 11px;
    background: #666;
}

.percent {
    margin-left: 4px;
    font-size: 10px;
}

.taskbar {
    height: 27px;
    background: linear-gradient(90deg, #e8e8e8, #e2e2e2 50%, #e5e5e5);
}
```
